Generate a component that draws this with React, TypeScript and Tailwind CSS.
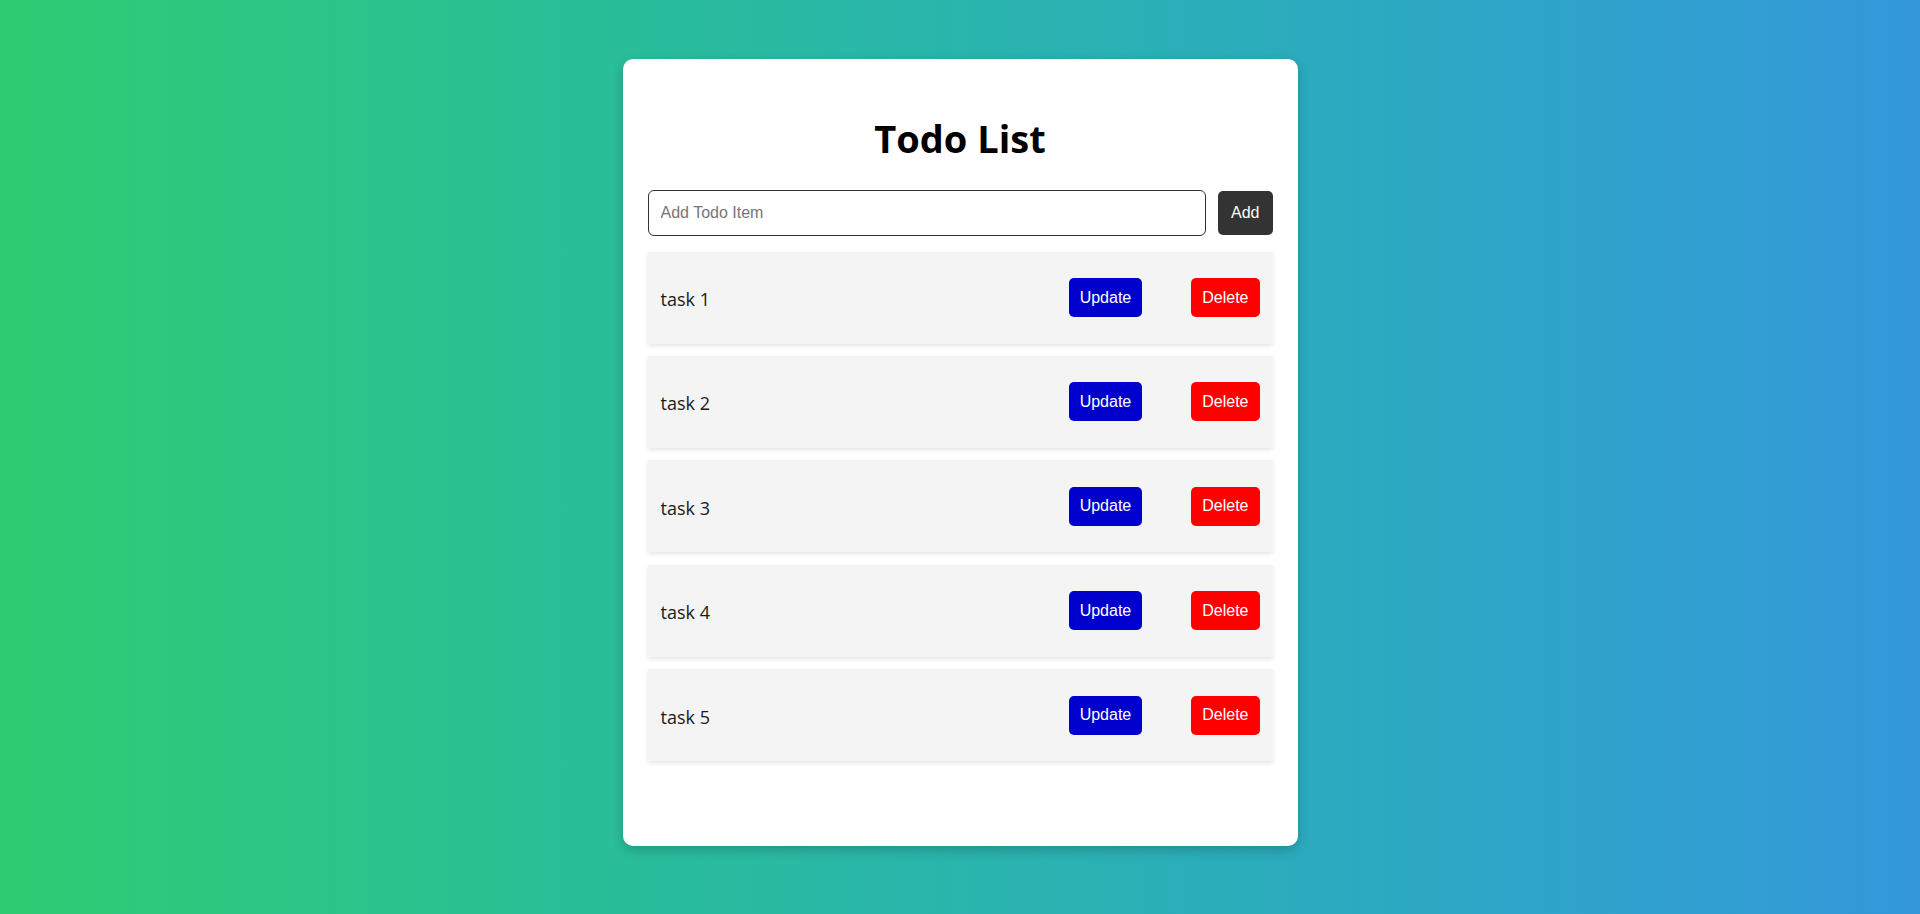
const tasks = ['task 1', 'task 2', 'task 3', 'task 4', 'task 5'];

export default function App() {
  return (
    <div className="min-h-screen bg-gradient-to-r from-[#2ecc71] to-[#3498db] pt-[59px]">
      <div className="mx-auto w-[675px] rounded-[10px] bg-white px-[25px] pt-[56px] pb-[85px] shadow-[0_4px_12px_rgba(0,0,0,0.2)]">
        <h1 className="text-center font-['Open_Sans',sans-serif] text-[38px] font-bold leading-[46px] text-black">
          Todo List
        </h1>

        {/* Add form */}
        <div className="mt-[29px] flex items-center gap-[12px]">
          <input
            type="text"
            placeholder="Add Todo Item"
            className="h-[46px] flex-1 rounded-[6px] border border-[#333] px-[12px] font-['Liberation_Sans',Arial,sans-serif] text-[16px] text-black outline-none placeholder:text-[#757575]"
          />
          <button className="h-[44px] rounded-[5px] bg-[#333] px-[13px] font-['Liberation_Sans',Arial,sans-serif] text-[16px] text-white">
            Add
          </button>
        </div>

        {/* Items */}
        <ul className="mt-[15.5px] flex flex-col gap-[12.4px]">
          {tasks.map((task) => (
            <li
              key={task}
              className="flex h-[92px] items-center bg-[#f4f4f4] pl-[13px] pr-[13px] shadow-[0_2px_4px_rgba(0,0,0,0.1)]"
            >
              <span className="flex-1 pt-[4px] font-['Open_Sans',sans-serif] text-[18px] text-[#1a1a1a]">
                {task}
              </span>
              <button className="h-[39px] rounded-[5px] bg-[#0000cd] px-[11px] font-['Liberation_Sans',Arial,sans-serif] text-[16px] text-white">
                Update
              </button>
              <button className="ml-[49px] h-[39px] rounded-[5px] bg-[#ff0000] px-[11px] font-['Liberation_Sans',Arial,sans-serif] text-[16px] text-white">
                Delete
              </button>
            </li>
          ))}
        </ul>
      </div>
    </div>
  );
}
